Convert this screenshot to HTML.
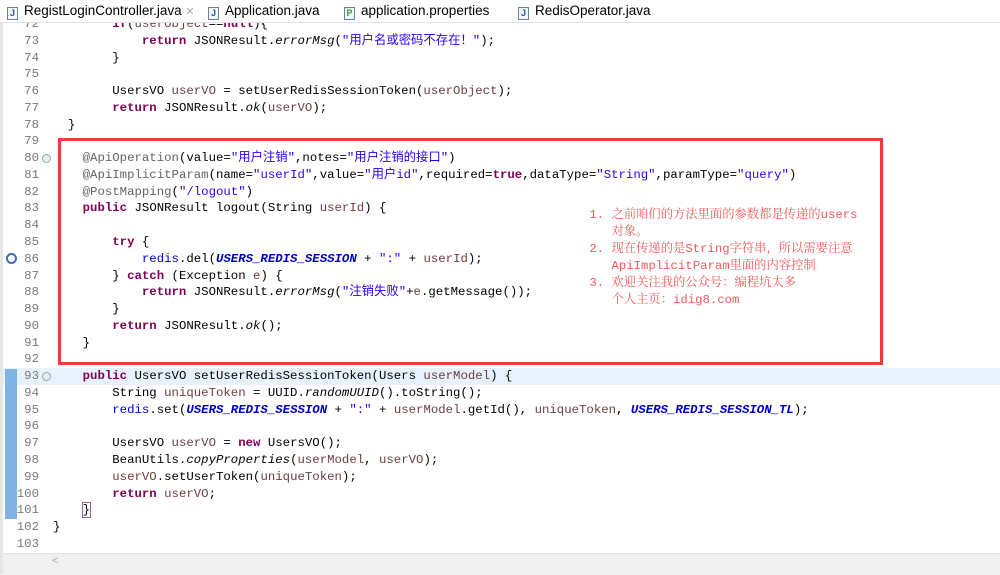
<!DOCTYPE html>
<html><head><meta charset="utf-8"><style>
body{margin:0;width:1000px;height:574px;overflow:hidden;background:#fff;position:relative;font-family:"Liberation Mono","Noto Sans CJK SC",monospace;}
.tabs{position:absolute;left:0;top:0;width:1000px;height:22px;background:#fff;border-bottom:1px solid #dfe3e8;font-family:"Liberation Sans",sans-serif;font-size:13.5px;color:#000;}
.tab{position:absolute;top:0;height:22px;line-height:22px;}
.ico{display:inline-block;width:9px;height:11px;border:1px solid #6d7f99;background:#f4f7fb;font-size:9px;line-height:11px;text-align:center;color:#2a56a0;vertical-align:-1px;margin-right:6px;font-weight:bold}
.code{position:absolute;left:0;top:16px;width:1000px;}
.l{position:absolute;left:0;height:17px;line-height:17px;font-size:12.35px;white-space:pre;width:1000px;}
.n{position:absolute;right:961px;color:#787878;}
.t{position:absolute;left:53px;color:#000;}
.k{color:#7f0055;font-weight:bold}
.s{color:#2a00ff}
.f{color:#0000c0;font-style:italic;font-weight:bold}
.i{font-style:italic}
.a{color:#646464}
.v{color:#6a3e3e}
.fld{color:#0000c0}
.box{position:absolute;left:58px;top:138px;width:819px;height:221px;border:3px solid #ee3b3b;}
.note{position:absolute;left:582px;top:207px;font-family:"Liberation Mono","Noto Serif CJK SC",serif;font-size:12.3px;line-height:17px;color:#f25a5a;white-space:pre;}
</style></head><body>
<div class="code">
<div class="l" style="top:0px"><span class="n">72</span><span class="t">        <span class="k">if</span>(<span class="v">userObject</span>==<span class="k">null</span>){</span></div>
<div class="l" style="top:16.77px"><span class="n">73</span><span class="t">            <span class="k">return</span> JSONResult.<span class="i">errorMsg</span>(<span class="s">"用户名或密码不存在！"</span>);</span></div>
<div class="l" style="top:33.54px"><span class="n">74</span><span class="t">        }</span></div>
<div class="l" style="top:50.31px"><span class="n">75</span></div>
<div class="l" style="top:67.08px"><span class="n">76</span><span class="t">        UsersVO <span class="v">userVO</span> = setUserRedisSessionToken(<span class="v">userObject</span>);</span></div>
<div class="l" style="top:83.85px"><span class="n">77</span><span class="t">        <span class="k">return</span> JSONResult.<span class="i">ok</span>(<span class="v">userVO</span>);</span></div>
<div class="l" style="top:100.62px"><span class="n">78</span><span class="t">  }</span></div>
<div class="l" style="top:117.39px"><span class="n">79</span></div>
<div class="l" style="top:134.16px"><span class="n">80</span><span class="t">    <span class="a">@ApiOperation</span>(value=<span class="s">"用户注销"</span>,notes=<span class="s">"用户注销的接口"</span>)</span></div>
<div class="l" style="top:150.93px"><span class="n">81</span><span class="t">    <span class="a">@ApiImplicitParam</span>(name=<span class="s">"userId"</span>,value=<span class="s">"用户id"</span>,required=<span class="k">true</span>,dataType=<span class="s">"String"</span>,paramType=<span class="s">"query"</span>)</span></div>
<div class="l" style="top:167.7px"><span class="n">82</span><span class="t">    <span class="a">@PostMapping</span>(<span class="s">"/logout"</span>)</span></div>
<div class="l" style="top:184.47px"><span class="n">83</span><span class="t">    <span class="k">public</span> JSONResult logout(String <span class="v">userId</span>) {</span></div>
<div class="l" style="top:201.24px"><span class="n">84</span></div>
<div class="l" style="top:218.01px"><span class="n">85</span><span class="t">        <span class="k">try</span> {</span></div>
<div class="l" style="top:234.78px"><span class="n">86</span><span class="t">            <span class="fld">redis</span>.del(<span class="f">USERS_REDIS_SESSION</span> + <span class="s">":"</span> + <span class="v">userId</span>);</span></div>
<div class="l" style="top:251.55px"><span class="n">87</span><span class="t">        } <span class="k">catch</span> (Exception <span class="v">e</span>) {</span></div>
<div class="l" style="top:268.32px"><span class="n">88</span><span class="t">            <span class="k">return</span> JSONResult.<span class="i">errorMsg</span>(<span class="s">"注销失败"</span>+<span class="v">e</span>.getMessage());</span></div>
<div class="l" style="top:285.09px"><span class="n">89</span><span class="t">        }</span></div>
<div class="l" style="top:301.86px"><span class="n">90</span><span class="t">        <span class="k">return</span> JSONResult.<span class="i">ok</span>();</span></div>
<div class="l" style="top:318.63px"><span class="n">91</span><span class="t">    }</span></div>
<div class="l" style="top:335.4px"><span class="n">92</span></div>
<div class="l" style="top:352.17px;background:#e8f2fe"><span class="n">93</span><span class="t">    <span class="k">public</span> UsersVO setUserRedisSessionToken(Users <span class="v">userModel</span>) {</span></div>
<div class="l" style="top:368.94px"><span class="n">94</span><span class="t">        String <span class="v">uniqueToken</span> = UUID.<span class="i">randomUUID</span>().toString();</span></div>
<div class="l" style="top:385.71px"><span class="n">95</span><span class="t">        <span class="fld">redis</span>.set(<span class="f">USERS_REDIS_SESSION</span> + <span class="s">":"</span> + <span class="v">userModel</span>.getId(), <span class="v">uniqueToken</span>, <span class="f">USERS_REDIS_SESSION_TL</span>);</span></div>
<div class="l" style="top:402.48px"><span class="n">96</span></div>
<div class="l" style="top:419.25px"><span class="n">97</span><span class="t">        UsersVO <span class="v">userVO</span> = <span class="k">new</span> UsersVO();</span></div>
<div class="l" style="top:436.02px"><span class="n">98</span><span class="t">        BeanUtils.<span class="i">copyProperties</span>(<span class="v">userModel</span>, <span class="v">userVO</span>);</span></div>
<div class="l" style="top:452.79px"><span class="n">99</span><span class="t">        <span class="v">userVO</span>.setUserToken(<span class="v">uniqueToken</span>);</span></div>
<div class="l" style="top:469.56px"><span class="n">100</span><span class="t">        <span class="k">return</span> <span class="v">userVO</span>;</span></div>
<div class="l" style="top:486.33px"><span class="n">101</span><span class="t">    <span style="outline:1px solid #a0609a">}</span></span></div>
<div class="l" style="top:503.1px"><span class="n">102</span><span class="t">}</span></div>
<div class="l" style="top:519.87px"><span class="n">103</span></div>
</div>
<div style="position:absolute;left:5px;top:369px;width:12px;height:150px;background:#7fb2e5"></div>
<div style="position:absolute;left:42px;top:154px;width:7px;height:7px;border:1px solid #8aa;border-radius:50%;background:#e8eef4"></div>
<div style="position:absolute;left:42px;top:372px;width:7px;height:7px;border:1px solid #8aa;border-radius:50%;background:#e8eef4"></div>
<div style="position:absolute;left:6px;top:253px;width:7px;height:7px;border:2px solid #3a70b0;border-radius:50%"></div>
<div style="position:absolute;left:0;top:553px;width:1000px;height:21px;background:#f0f0f0;border-top:1px solid #e4e4e4"></div>
<div style="position:absolute;left:52px;top:556px;color:#aaa;font-size:11px">&lt;</div>
<div style="position:absolute;left:0;top:22px;width:3px;height:552px;background:#e6e6e6"></div>
<div class="box"></div>
<div class="note"> 1. 之前咱们的方法里面的参数都是传递的users
    对象。
 2. 现在传递的是String字符串，所以需要注意
    ApiImplicitParam里面的内容控制
 3. 欢迎关注我的公众号：编程坑太多
    个人主页：idig8.com</div>
<div class="tabs">
<div class="tab" style="left:0;width:200px;background:#fff"><span style="margin-left:7px" class="ico">J</span>RegistLoginController.java <span style="color:#aaa;font-size:11px">✕</span></div>
<div class="tab" style="left:208px"><span class="ico">J</span>Application.java</div>
<div class="tab" style="left:344px"><span class="ico" style="color:#3a9a3a">P</span>application.properties</div>
<div class="tab" style="left:518px"><span class="ico">J</span>RedisOperator.java</div>
</div>
</body></html>
